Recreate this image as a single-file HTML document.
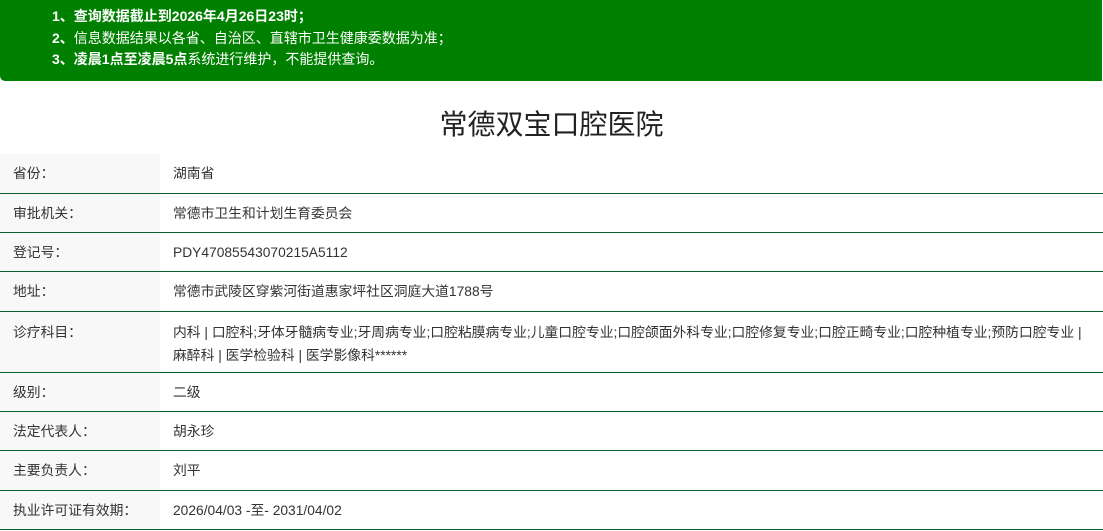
<!DOCTYPE html>
<html><head><meta charset="utf-8">
<style>
*{margin:0;padding:0;box-sizing:border-box}
body{width:1103px;height:531px;overflow:hidden;background:#fff;font-family:"Liberation Sans","Noto Sans CJK SC",sans-serif;color:#333}
.banner{position:absolute;left:0;top:0;width:1102px;height:81px;background:#008000;border-bottom-left-radius:5px;color:#fff;font-size:14px;padding:6px 0 0 52px;line-height:21.7px}
.banner b{font-weight:bold}
.title{position:absolute;top:104px;left:0;width:1103px;text-align:center;font-size:28px;line-height:42px;color:#222}
table{position:absolute;top:154px;left:0;width:1103px;border-collapse:collapse;font-size:13.8px}
td{border-bottom:1.5px solid #0a6030;vertical-align:top;padding:10px 0 0 13px;height:39.3px;line-height:20px;white-space:nowrap}
td.l{width:160px;background:#f8f8f8}
td.v{padding-left:13px}
tr.m td{height:61px;padding-top:9px;line-height:23px}
</style></head><body>
<div class="banner">
<div><b>1、查询数据截止到2026年4月26日23时；</b></div>
<div><b>2、</b>信息数据结果以各省、自治区、直辖市卫生健康委数据为准；</div>
<div><b>3、凌晨1点至凌晨5点</b>系统进行维护，不能提供查询。</div>
</div>
<div class="title">常德双宝口腔医院</div>
<table>
<tr><td class="l">省份：</td><td class="v">湖南省</td></tr>
<tr><td class="l">审批机关：</td><td class="v">常德市卫生和计划生育委员会</td></tr>
<tr><td class="l">登记号：</td><td class="v">PDY47085543070215A5112</td></tr>
<tr><td class="l">地址：</td><td class="v">常德市武陵区穿紫河街道惠家坪社区洞庭大道1788号</td></tr>
<tr class="m"><td class="l">诊疗科目：</td><td class="v">内科 | 口腔科;牙体牙髓病专业;牙周病专业;口腔粘膜病专业;儿童口腔专业;口腔颌面外科专业;口腔修复专业;口腔正畸专业;口腔种植专业;预防口腔专业 |<br>麻醉科 | 医学检验科 | 医学影像科******</td></tr>
<tr><td class="l">级别：</td><td class="v">二级</td></tr>
<tr><td class="l">法定代表人：</td><td class="v">胡永珍</td></tr>
<tr><td class="l">主要负责人：</td><td class="v">刘平</td></tr>
<tr><td class="l">执业许可证有效期：</td><td class="v">2026/04/03 -至- 2031/04/02</td></tr>
</table>
</body></html>
